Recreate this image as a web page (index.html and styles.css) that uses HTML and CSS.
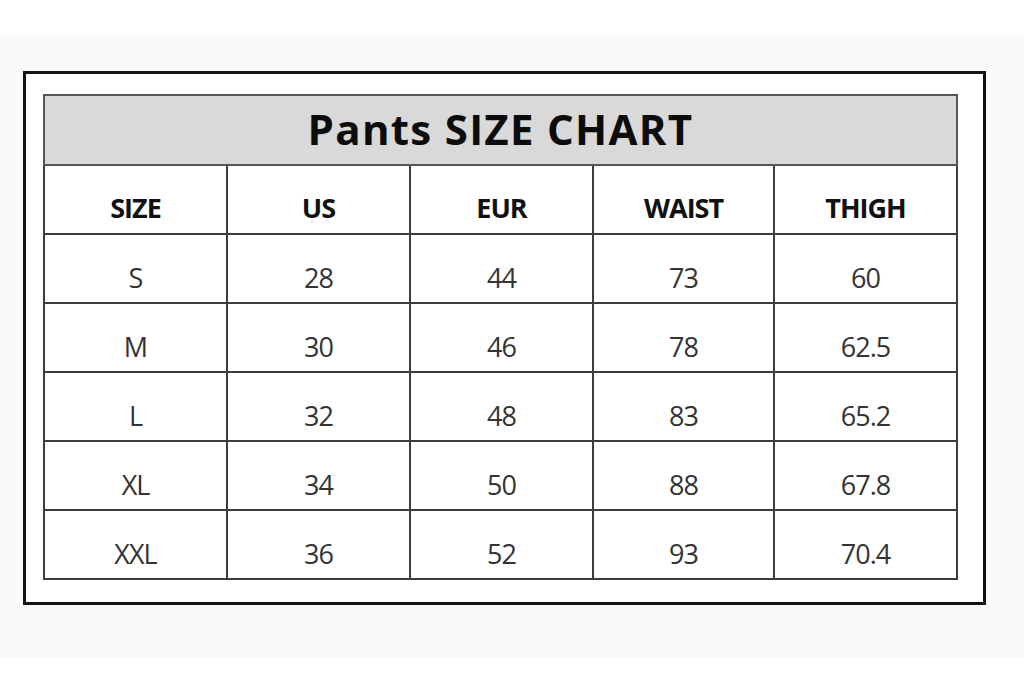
FILE: index.html
```html
<!DOCTYPE html>
<html>
<head>
<meta charset="utf-8">
<link rel="stylesheet" href="styles.css">
</head>
<body>
<div class="top"></div>
<div class="stage">
  <div class="frame">
    <table class="chart">
      <colgroup>
        <col class="c"><col class="c"><col class="c"><col class="c narrow"><col class="c">
      </colgroup>
      <tr class="title-row"><th colspan="5" class="title">Pants SIZE CHART</th></tr>
      <tr class="head-row"><th>SIZE</th><th>US</th><th>EUR</th><th>WAIST</th><th>THIGH</th></tr>
      <tr><td>S</td><td>28</td><td>44</td><td>73</td><td>60</td></tr>
      <tr><td>M</td><td>30</td><td>46</td><td>78</td><td>62.5</td></tr>
      <tr><td>L</td><td>32</td><td>48</td><td>83</td><td>65.2</td></tr>
      <tr><td>XL</td><td>34</td><td>50</td><td>88</td><td>67.8</td></tr>
      <tr><td>XXL</td><td>36</td><td>52</td><td>93</td><td>70.4</td></tr>
    </table>
  </div>
</div>
</body>
</html>
```

FILE: styles.css
```css
html, body {
  margin: 0;
  padding: 0;
  background: #ffffff;
  font-family: "Open Sans", "Noto Sans", sans-serif;
}
.top {
  height: 35px;
  background: #ffffff;
}
.stage {
  height: 623px;
  background: #fafafa;
  padding-top: 36px;
  padding-left: 23px;
  box-sizing: border-box;
}
.frame {
  width: 963px;
  height: 534px;
  box-sizing: border-box;
  border: 3px solid #111318;
  background: #ffffff;
  padding: 20px 25px 0 17px;
}
.chart {
  width: 911px;
  border-collapse: collapse;
  table-layout: fixed;
  color: #2b2b2b;
}
.chart col.c {
  width: 183px;
}
.chart col.narrow {
  width: 181px;
}
.chart th, .chart td {
  border: 2px solid #3c3c3c;
  text-align: center;
  padding: 0;
  height: 69px;
  box-sizing: border-box;
}
.title-row th.title {
  background: #d9d9d9;
  color: #0c0c0c;
  font-size: 42px;
  font-weight: 700;
  letter-spacing: 1.3px;
  height: 70px;
  padding-bottom: 3px;
  border-color: #555555;
}
.head-row th {
  font-size: 27px;
  font-weight: 700;
  color: #111111;
  letter-spacing: -1px;
  padding-top: 16px;
}
.chart td {
  font-size: 27px;
  font-weight: 400;
  letter-spacing: -1px;
  color: #333333;
  padding-top: 18px;
}
```
